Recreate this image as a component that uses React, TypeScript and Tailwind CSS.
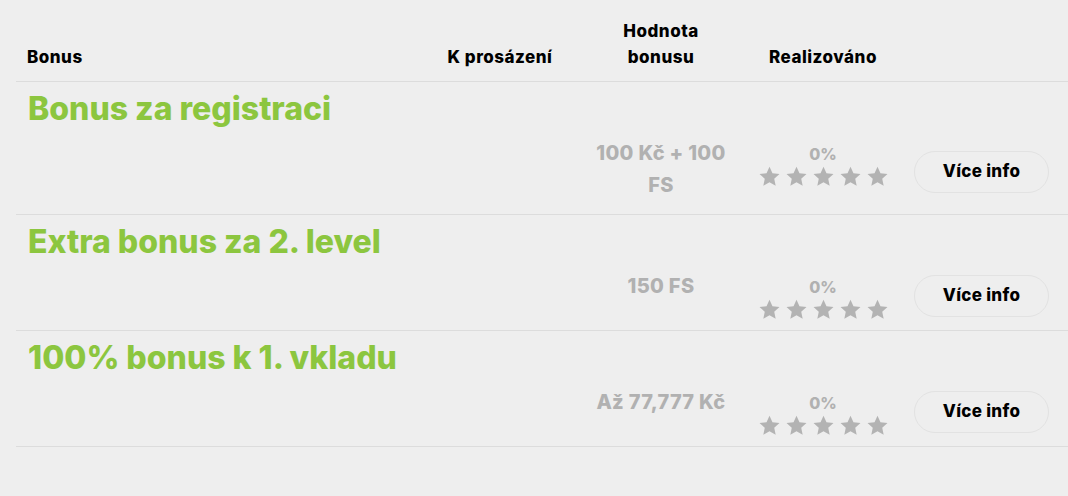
import React from 'react';

type Bonus = { title: string; value: string; done: string };

const bonuses: Bonus[] = [
  { title: 'Bonus za registraci', value: '100 Kč + 100 FS', done: '0%' },
  { title: 'Extra bonus za 2. level', value: '150 FS', done: '0%' },
  { title: '100% bonus k 1. vkladu', value: 'Až 77,777 Kč', done: '0%' },
];

const cols = 'grid grid-cols-[404px_160px_162px_162px_1fr]';

const Star = () => (
  <svg viewBox="0 0 24 24" className="w-[21px] h-[21px] fill-[#b3b3b3]" aria-hidden="true">
    <polygon points="12,0.8 15.4,8.2 23.41,9.09 17.4,14.6 19.05,22.51 12,18.5 4.95,22.51 6.6,14.6 0.59,9.09 8.6,8.2" />
  </svg>
);

const Row: React.FC<{ bonus: Bonus }> = ({ bonus }) => (
  <div className="border-b border-[#dcdcdc] pt-[9px] pb-[10px]">
    <h3 className="pl-3 text-[32px] leading-[36px] font-extrabold text-[#8cc63f]">{bonus.title}</h3>
    <div className={`${cols} items-start mt-[10px]`}>
      <div />
      <div />
      <div className="flex justify-center pb-[3px]">
        <p className="max-w-[145px] text-center text-[20px] leading-[32px] font-extrabold tracking-[0.3px] text-[#b1b1b1]">
          {bonus.value}
        </p>
      </div>
      <div className="flex flex-col items-center pt-[7px]">
        <span className="text-[16px] leading-[20px] font-extrabold text-[#b1b1b1]">{bonus.done}</span>
        <div className="flex gap-[6px] mt-[2px]">
          {[0, 1, 2, 3, 4].map((i) => (
            <Star key={i} />
          ))}
        </div>
      </div>
      <div className="self-center mt-[2px] pl-[10px]">
        <button className="w-[135px] h-[42px] rounded-full border border-[#e2e2e2] text-[17px] font-extrabold tracking-[0.3px] text-black">
          Více info
        </button>
      </div>
    </div>
  </div>
);

export default function App() {
  return (
    <div className="min-h-screen bg-[#eeeeee] pl-4 pt-[18px] font-['Inter',sans-serif]">
      <div className={`${cols} items-end border-b border-[#dcdcdc] pb-[11px] text-[17px] leading-[26px] font-extrabold tracking-[0.5px] text-black`}>
        <div className="pl-[11px]">Bonus</div>
        <div className="text-center">K prosázení</div>
        <div className="text-center px-9">Hodnota bonusu</div>
        <div className="text-center">Realizováno</div>
        <div />
      </div>
      {bonuses.map((b) => (
        <Row key={b.title} bonus={b} />
      ))}
    </div>
  );
}
